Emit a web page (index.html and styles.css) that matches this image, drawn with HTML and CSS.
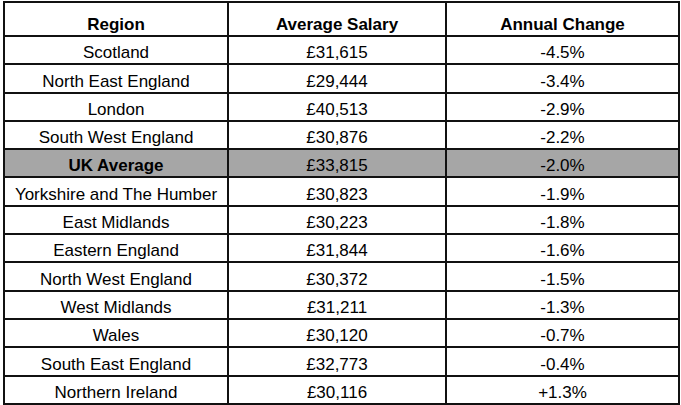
FILE: index.html
```html
<!DOCTYPE html>
<html>
<head>
<meta charset="utf-8">
<link rel="stylesheet" href="styles.css">
</head>
<body>
<table class="salary">
  <colgroup>
    <col class="c1"><col class="c2"><col class="c3">
  </colgroup>
  <thead>
    <tr class="head"><th>Region</th><th>Average Salary</th><th>Annual Change</th></tr>
  </thead>
  <tbody>
    <tr><td>Scotland</td><td>£31,615</td><td>-4.5%</td></tr>
    <tr><td>North East England</td><td>£29,444</td><td>-3.4%</td></tr>
    <tr><td>London</td><td>£40,513</td><td>-2.9%</td></tr>
    <tr><td>South West England</td><td>£30,876</td><td>-2.2%</td></tr>
    <tr class="avg"><td class="bold">UK Average</td><td>£33,815</td><td>-2.0%</td></tr>
    <tr><td>Yorkshire and The Humber</td><td>£30,823</td><td>-1.9%</td></tr>
    <tr><td>East Midlands</td><td>£30,223</td><td>-1.8%</td></tr>
    <tr><td>Eastern England</td><td>£31,844</td><td>-1.6%</td></tr>
    <tr><td>North West England</td><td>£30,372</td><td>-1.5%</td></tr>
    <tr><td>West Midlands</td><td>£31,211</td><td>-1.3%</td></tr>
    <tr><td>Wales</td><td>£30,120</td><td>-0.7%</td></tr>
    <tr><td>South East England</td><td>£32,773</td><td>-0.4%</td></tr>
    <tr><td>Northern Ireland</td><td>£30,116</td><td>+1.3%</td></tr>
  </tbody>
</table>
</body>
</html>
```

FILE: styles.css
```css
html, body {
  margin: 0;
  padding: 0;
  background: #ffffff;
}

.salary {
  margin: 1px 0 0 3px;
  width: 675px;
  table-layout: fixed;
  border-collapse: collapse;
  font-family: "Liberation Sans", Arial, sans-serif;
  font-size: 17px;
  color: #000;
}

.c1 { width: 224px; }
.c2 { width: 218px; }
.c3 { width: 233px; }

.salary th,
.salary td {
  border: 2px solid #111;
  text-align: center;
  vertical-align: bottom;
  padding: 0;
  line-height: 20px;
  white-space: nowrap;
}

.salary th {
  font-weight: bold;
}

.head {
  height: 34px;
}

.salary tbody tr {
  height: 28.3px;
}

.avg {
  background: #a6a6a6;
}

.bold {
  font-weight: bold;
}
```
